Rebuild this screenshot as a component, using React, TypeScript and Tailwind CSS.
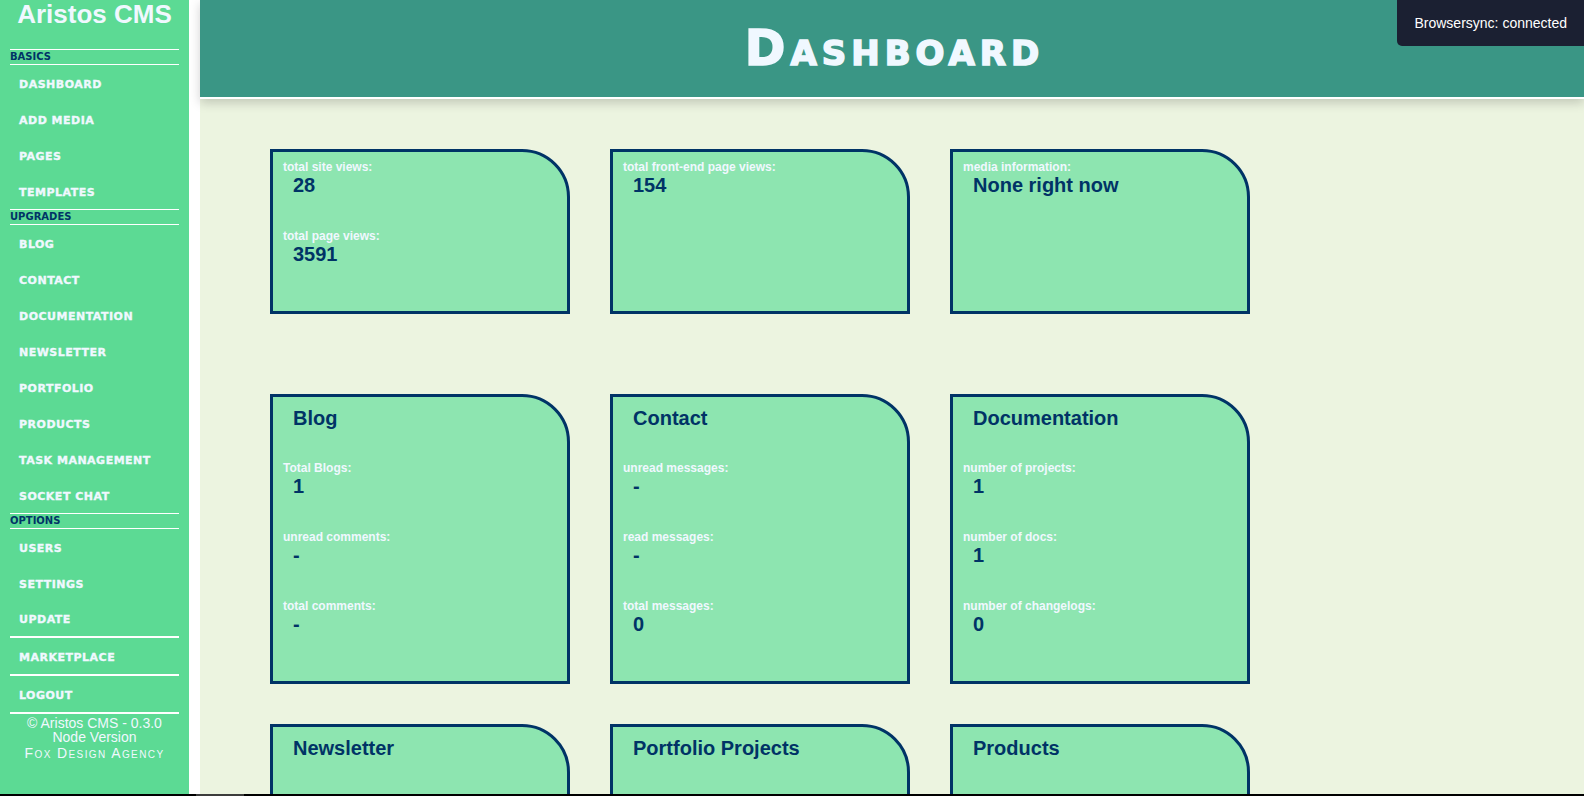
import React from 'react';

type Stat = { label: string; value: string };
type CardData = { title?: string; stats: Stat[] };

const navSections: { head: string; items: string[] }[] = [
  { head: 'BASICS', items: ['DASHBOARD', 'ADD MEDIA', 'PAGES', 'TEMPLATES'] },
  {
    head: 'UPGRADES',
    items: ['BLOG', 'CONTACT', 'DOCUMENTATION', 'NEWSLETTER', 'PORTFOLIO', 'PRODUCTS', 'TASK MANAGEMENT', 'SOCKET CHAT'],
  },
  { head: 'OPTIONS', items: ['USERS', 'SETTINGS'] },
];

const rows: CardData[][] = [
  [
    { stats: [{ label: 'total site views:', value: '28' }, { label: 'total page views:', value: '3591' }] },
    { stats: [{ label: 'total front-end page views:', value: '154' }] },
    { stats: [{ label: 'media information:', value: 'None right now' }] },
  ],
  [
    {
      title: 'Blog',
      stats: [
        { label: 'Total Blogs:', value: '1' },
        { label: 'unread comments:', value: '-' },
        { label: 'total comments:', value: '-' },
      ],
    },
    {
      title: 'Contact',
      stats: [
        { label: 'unread messages:', value: '-' },
        { label: 'read messages:', value: '-' },
        { label: 'total messages:', value: '0' },
      ],
    },
    {
      title: 'Documentation',
      stats: [
        { label: 'number of projects:', value: '1' },
        { label: 'number of docs:', value: '1' },
        { label: 'number of changelogs:', value: '0' },
      ],
    },
  ],
  // lower row runs past the fold, only the titles are visible
  [
    { title: 'Newsletter', stats: [] },
    { title: 'Portfolio Projects', stats: [] },
    { title: 'Products', stats: [] },
  ],
];

const SectionHead: React.FC<{ text: string }> = ({ text }) => (
  <div className="h-[16px] border-y border-white text-[10px] font-bold leading-[14px] text-[#003366] font-['DejaVu_Sans',sans-serif]">
    {text}
  </div>
);

const NavItem: React.FC<{ text: string; h?: string }> = ({ text, h = 'h-[36px]' }) => (
  <div
    className={`${h} flex items-center pl-[9px] pt-[4px] text-[11px] font-bold tracking-[0.5px] text-[#f0f8ff] font-['DejaVu_Sans',sans-serif] [-webkit-text-stroke:0.35px_#f0f8ff]`}
  >
    {text}
  </div>
);

const Card: React.FC<{ card: CardData }> = ({ card }) => (
  <div
    className={`w-[300px] shrink-0 rounded-tr-[48px] border-[3px] border-[#003366] bg-[#8de5b0] px-[10px] pt-[8px] pb-[13px] ${
      card.stats.length === 0 ? 'min-h-[200px]' : ''
    }`}
  >
    {card.title && (
      <h2 className="mt-[2px] mb-[31px] pl-[10px] text-[20px] font-bold leading-[23px] text-[#003366]">{card.title}</h2>
    )}
    {card.stats.map((s) => (
      <div key={s.label} className="mb-[32px]">
        <p className="text-[12px] font-bold leading-[14px] text-[#f0f8ff]">{s.label}</p>
        <p className="pl-[10px] text-[20px] font-bold leading-[23px] text-[#003366]">{s.value}</p>
      </div>
    ))}
  </div>
);

export default function App() {
  return (
    <div className="flex h-[796px] w-full overflow-hidden bg-white font-['Liberation_Sans',Arial,sans-serif]">
      {/* sidebar */}
      <aside className="w-[189px] shrink-0 bg-[#5cda94] px-[10px]">
        <h1 className="text-center text-[26px] font-bold leading-[28px] text-[#f0f8ff]">Aristos CMS</h1>
        <div className="mt-[21px]">
          {navSections.map((sec) => (
            <div key={sec.head}>
              <SectionHead text={sec.head} />
              {sec.items.map((it) => (
                <NavItem key={it} text={it} />
              ))}
            </div>
          ))}
          <NavItem text="UPDATE" h="h-[35px]" />
          <div className="h-[2px] bg-white" />
          <NavItem text="MARKETPLACE" />
          <div className="h-[2px] bg-white" />
          <NavItem text="LOGOUT" />
          <div className="h-[2px] bg-white" />
          <div className="mt-[2px] text-center text-[14px] leading-[14px] text-[#f0f8ff]">
            <p>© Aristos CMS - 0.3.0</p>
            <p>Node Version</p>
            <p className="mt-[2px] tracking-[1.4px] [font-variant:small-caps]">Fox Design Agency</p>
          </div>
        </div>
      </aside>

      {/* main */}
      <main className="ml-[11px] flex flex-1 flex-col bg-[#ecf4e0]">
        <header className="relative z-10 flex h-[99px] shrink-0 items-center justify-center border-b-2 border-white bg-[#3a9685] shadow-[0_4px_10px_rgba(0,0,0,0.18)]">
          <h1 className="pl-[5px] text-[49px] font-bold leading-none tracking-[5px] text-[#f0f8ff] font-['DejaVu_Sans',sans-serif] [font-variant:small-caps] [-webkit-text-stroke:1.6px_#f0f8ff]">
            Dashboard
          </h1>
        </header>
        <div className="pl-[70px] pt-[50px]">
          {rows.map((row, i) => (
            <div key={i} className={`flex gap-[40px] ${i === 1 ? 'mt-[80px]' : i === 2 ? 'mt-[40px]' : ''}`}>
              {row.map((c, j) => (
                <Card key={j} card={c} />
              ))}
            </div>
          ))}
        </div>
      </main>

      {/* browsersync notice */}
      <div className="fixed top-0 right-0 z-50 rounded-bl-[5px] bg-[#1b2032] px-[17px] py-[15px] text-[14px] leading-[16px] text-white">
        Browsersync: connected
      </div>

      {/* bottom scroll strip */}
      <div className="fixed bottom-0 left-0 right-0 z-50 h-[2px] bg-black">
        <div className="absolute left-[196px] top-0 h-[2px] w-[48px] bg-[#3c3c3c]" />
      </div>
    </div>
  );
}
